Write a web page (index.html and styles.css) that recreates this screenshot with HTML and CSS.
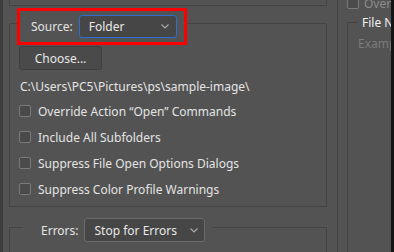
FILE: index.html
```html
<!DOCTYPE html>
<html lang="en">
<head>
  <meta charset="UTF-8">
  <title>Batch</title>
  <link rel="stylesheet" href="styles.css">
</head>
<body>
  <div class="dialog">
    <div class="edge-left"></div>
    <div class="col-main">
      <div class="prev-group"></div>
      <fieldset class="group source-group">
        <legend class="source-head">
          <span class="highlight">
            <span class="field-label">Source:</span>
            <span class="select select-focus select-source">Folder
              <svg class="chevron" viewBox="0 0 8 5" width="8" height="5"><path d="M0.5 0.5 L4 4 L7.5 0.5" fill="none" stroke="#a8a8a8" stroke-width="1.2"/></svg>
            </span>
          </span>
        </legend>
        <button class="btn">Choose...</button>
        <div class="path">C:\Users\PC5\Pictures\ps\sample-image\</div>
        <ul class="checks">
          <li><span class="box"></span>Override Action “Open” Commands</li>
          <li><span class="box"></span>Include All Subfolders</li>
          <li><span class="box"></span>Suppress File Open Options Dialogs</li>
          <li><span class="box"></span>Suppress Color Profile Warnings</li>
        </ul>
      </fieldset>
      <fieldset class="group errors-group">
        <legend class="errors-head">
          <span class="field-label">Errors:</span>
          <span class="select select-errors">Stop for Errors
            <svg class="chevron" viewBox="0 0 8 5" width="8" height="5"><path d="M0.5 0.5 L4 4 L7.5 0.5" fill="none" stroke="#a8a8a8" stroke-width="1.2"/></svg>
          </span>
        </legend>
      </fieldset>
    </div>
    <div class="col-side">
      <div class="side-group">
        <div class="side-check"><span class="box"></span>Override Action</div>
        <fieldset class="group file-group">
          <legend class="file-head">File Naming</legend>
          <div class="hint">Example: MyFile.gif</div>
        </fieldset>
      </div>
    </div>
    <div class="edge-right"></div>
  </div>
</body>
</html>
```
FILE: styles.css
```css
body {
  margin: 0;
  background-color: #535353;
  font-family: 'Noto Sans', sans-serif;
  font-size: 12px;
  color: #e4e4e4;
}
.dialog {
  display: flex;
  width: 394px;
  height: 252px;
  overflow: hidden;
  background-color: #535353;
}
.edge-left {
  width: 3px;
  flex: none;
  background-color: #3e3e3e;
}
.edge-right {
  width: 3px;
  flex: none;
  background-color: #141414;
}
.col-main {
  width: 318px;
  flex: none;
  margin-left: 6px;
}
.col-side {
  width: 54px;
  flex: none;
  margin-left: 10px;
  overflow: hidden;
}
.prev-group {
  height: 5px;
  border: 1px solid #444444;
  border-top: none;
}
.group {
  margin: 0;
  padding: 0 9px;
  border: 1px solid #444444;
  min-width: 0;
}
.source-group {
  margin-top: -4px;
  padding-bottom: 4px;
}
.source-head {
  padding: 6px 0 0 0;
  margin-left: -2px;
}
.highlight {
  display: flex;
  align-items: center;
  gap: 6px;
  padding: 4px 7px 4px 11px;
  border: 3px solid #ff0000;
}
.field-label {
  color: #e4e4e4;
}
.select {
  display: flex;
  align-items: center;
  justify-content: space-between;
  box-sizing: border-box;
  border: 1px solid #6a6a6a;
  border-radius: 3px;
  background-color: #464646;
  color: #e8e8e8;
}
.select-focus {
  border-color: #2d6fd0;
}
.select-source {
  width: 98px;
  height: 23px;
  padding: 0 7px 0 9px;
}
.select-errors {
  width: 121px;
  height: 24px;
  padding: 0 6px 0 10px;
}
.chevron {
  display: block;
}
.btn {
  display: block;
  margin-top: 1px;
  width: 83px;
  height: 24px;
  padding: 0;
  border: 1px solid #3f3f3f;
  border-radius: 3px;
  background-color: #4a4a4a;
  font-family: 'Noto Sans', sans-serif;
  font-size: 12px;
  color: #e8e8e8;
}
.path {
  margin-top: 9px;
  line-height: 16px;
  padding-left: 1px;
  white-space: nowrap;
}
.checks {
  list-style: none;
  margin: 3px 0 0 0;
  padding: 0;
}
.checks li {
  display: flex;
  align-items: center;
  gap: 7px;
  height: 26px;
  white-space: nowrap;
}
.box {
  display: block;
  flex: none;
  box-sizing: border-box;
  width: 12px;
  height: 12px;
  border: 1px solid #7a7a7a;
  border-radius: 2px;
  background-color: #4a4a4a;
}
.errors-group {
  margin-top: 5px;
  min-height: 60px;
}
.errors-head {
  display: flex;
  align-items: center;
  gap: 5px;
  margin-left: 4px;
  padding: 6px 7px 0 18px;
}
.side-group {
  min-height: 260px;
  border-left: 1px solid #444444;
  padding-left: 9px;
}
.side-check {
  display: flex;
  align-items: center;
  gap: 5px;
  margin-top: -4px;
  height: 14px;
  color: #8c8c8c;
  white-space: nowrap;
}
.file-group {
  margin-top: 4px;
  padding: 0 0 0 10px;
  min-height: 240px;
  border-right: none;
  border-bottom: none;
}
.file-head {
  padding: 0 0 0 4px;
  color: #f2f2f2;
  white-space: nowrap;
}
.hint {
  margin-top: 4px;
  color: #7c7c7c;
  white-space: nowrap;
}
```
